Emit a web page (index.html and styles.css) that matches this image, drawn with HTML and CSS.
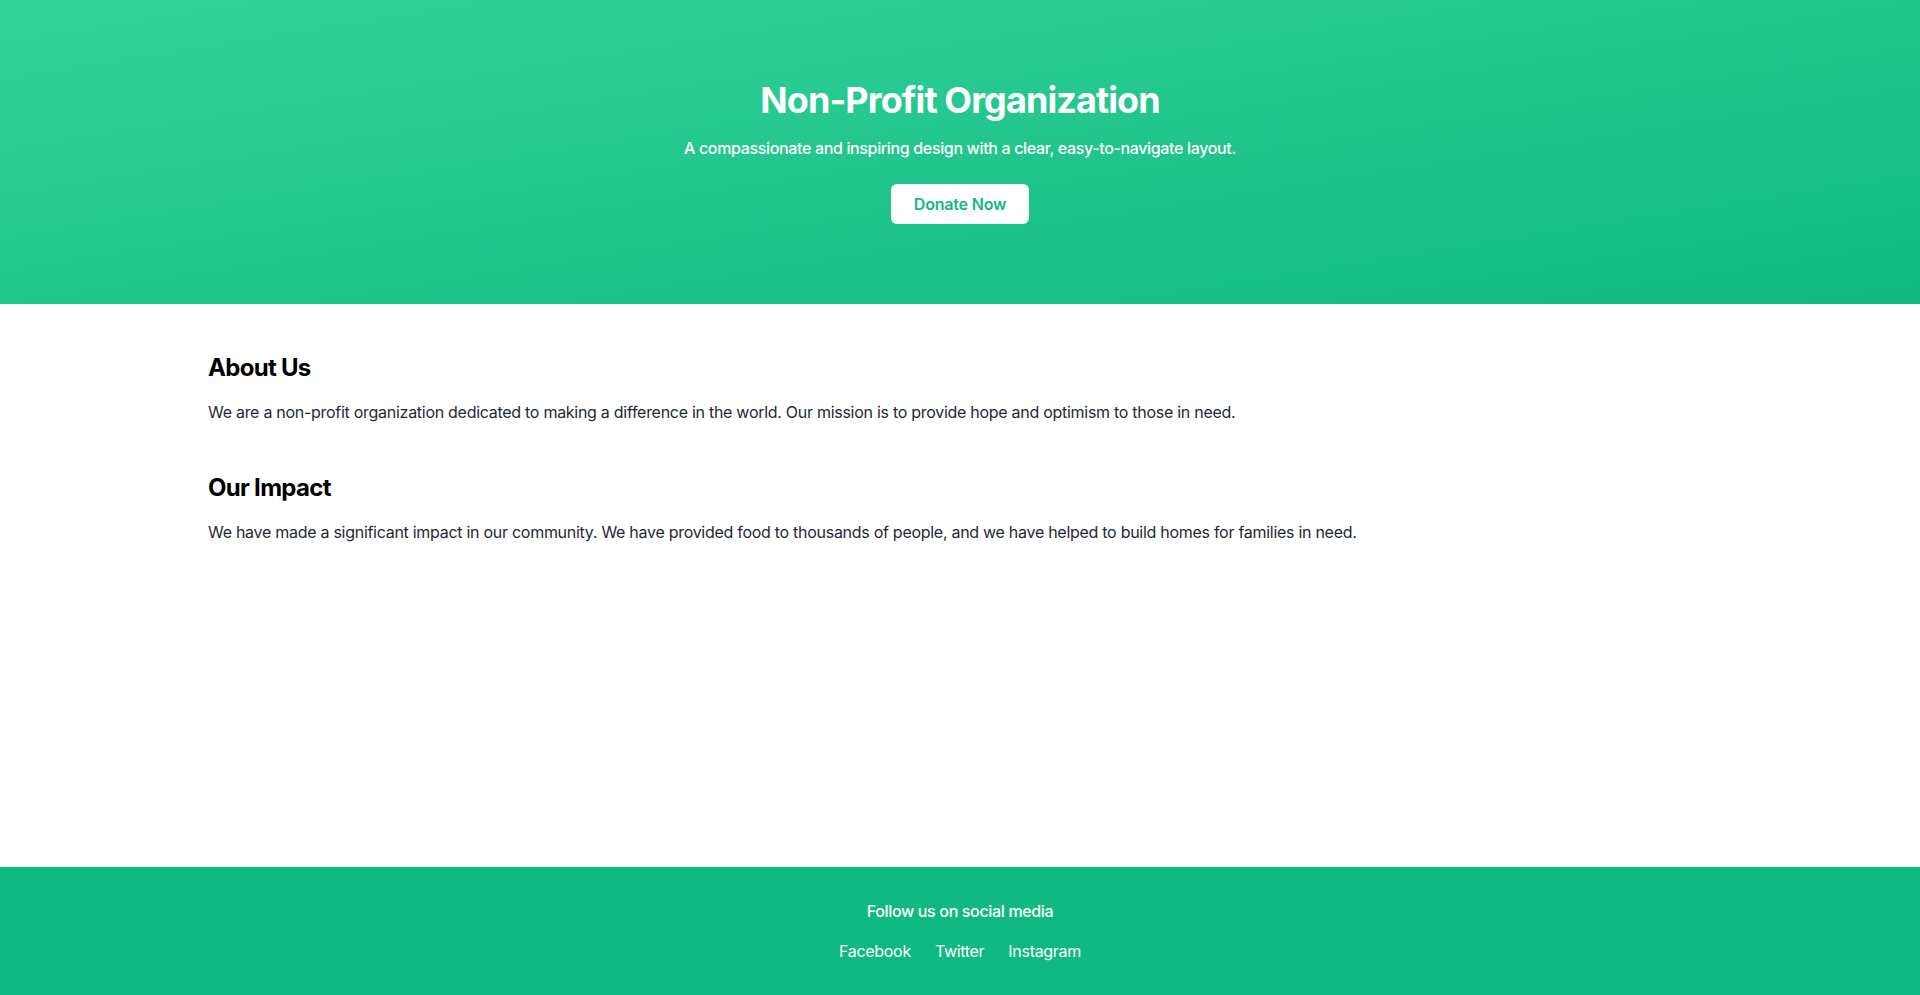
FILE: index.html
```html
<!DOCTYPE html>
<html lang="en">
<head>
<meta charset="utf-8">
<title>Non-Profit Organization</title>
<link rel="stylesheet" href="styles.css">
</head>
<body>
<div class="page">
  <header class="hero">
    <div class="container hero-inner">
      <h1 class="hero-title">Non-Profit Organization</h1>
      <p class="hero-sub">A compassionate and inspiring design with a clear, easy-to-navigate layout.</p>
      <a class="btn" href="#">Donate Now</a>
    </div>
  </header>
  <main class="main">
    <div class="container">
      <section class="section">
        <h2 class="section-title">About Us</h2>
        <p class="section-text">We are a non-profit organization dedicated to making a difference in the world. Our mission is to provide hope and optimism to those in need.</p>
      </section>
      <section class="section">
        <h2 class="section-title">Our Impact</h2>
        <p class="section-text">We have made a significant impact in our community. We have provided food to thousands of people, and we have helped to build homes for families in need.</p>
      </section>
    </div>
  </main>
  <footer class="footer">
    <div class="container footer-inner">
      <p class="footer-text">Follow us on social media</p>
      <nav class="footer-links">
        <a href="#">Facebook</a>
        <a href="#">Twitter</a>
        <a href="#">Instagram</a>
      </nav>
    </div>
  </footer>
</div>
</body>
</html>
```

FILE: styles.css
```css
* { box-sizing: border-box; }
html, body { margin: 0; padding: 0; }
body {
  font-family: Inter, "Noto Sans", "Liberation Sans", sans-serif;
  color: #000;
  background: #fff;
}
.page {
  min-height: 995px;
  display: flex;
  flex-direction: column;
}
.container {
  max-width: 1536px;
  margin: 0 auto;
  padding: 0 16px;
  width: 100%;
}
.hero {
  background: linear-gradient(to bottom right, #34d399, #10b981);
  color: #fff;
  padding: 80px 0;
}
.hero-inner {
  display: flex;
  flex-direction: column;
  align-items: center;
  text-align: center;
}
.hero-title {
  margin: 0 0 14px;
  font-size: 36px;
  line-height: 40px;
  font-weight: 700;
  letter-spacing: -0.9px;
}
.hero-sub {
  margin: 0 0 22px;
  font-size: 16px;
  line-height: 28px;
  font-weight: 500;
  letter-spacing: -0.35px;
}
.btn {
  display: inline-block;
  background: #fff;
  color: #10b981;
  font-weight: 600;
  font-size: 16px;
  line-height: 24px;
  padding: 8px 0;
  width: 138px;
  border-radius: 6px;
  text-decoration: none;
  text-align: center;
  white-space: nowrap;
  letter-spacing: -0.2px;
}
.main {
  flex: 1;
  padding: 48px 0;
}
.section { margin-bottom: 48px; }
.section:last-child { margin-bottom: 0; }
.section-title {
  margin: 0 0 16px;
  font-size: 24px;
  line-height: 32px;
  font-weight: 700;
  letter-spacing: -0.7px;
}
.section-text {
  margin: 0;
  font-size: 16px;
  line-height: 24px;
  color: #1f2937;
  letter-spacing: -0.28px;
}
.footer {
  background: #10b981;
  color: #fff;
  padding: 32px 0;
}
.footer-inner { text-align: center; }
.footer-text {
  margin: 0 0 16px;
  font-size: 16px;
  line-height: 24px;
  font-weight: 500;
  letter-spacing: -0.34px;
}
.footer-links {
  display: flex;
  justify-content: center;
  gap: 24px;
  font-size: 16px;
  line-height: 24px;
}
.footer-links a {
  color: #fff;
  text-decoration: none;
  font-weight: 400;
  letter-spacing: -0.3px;
}
```
